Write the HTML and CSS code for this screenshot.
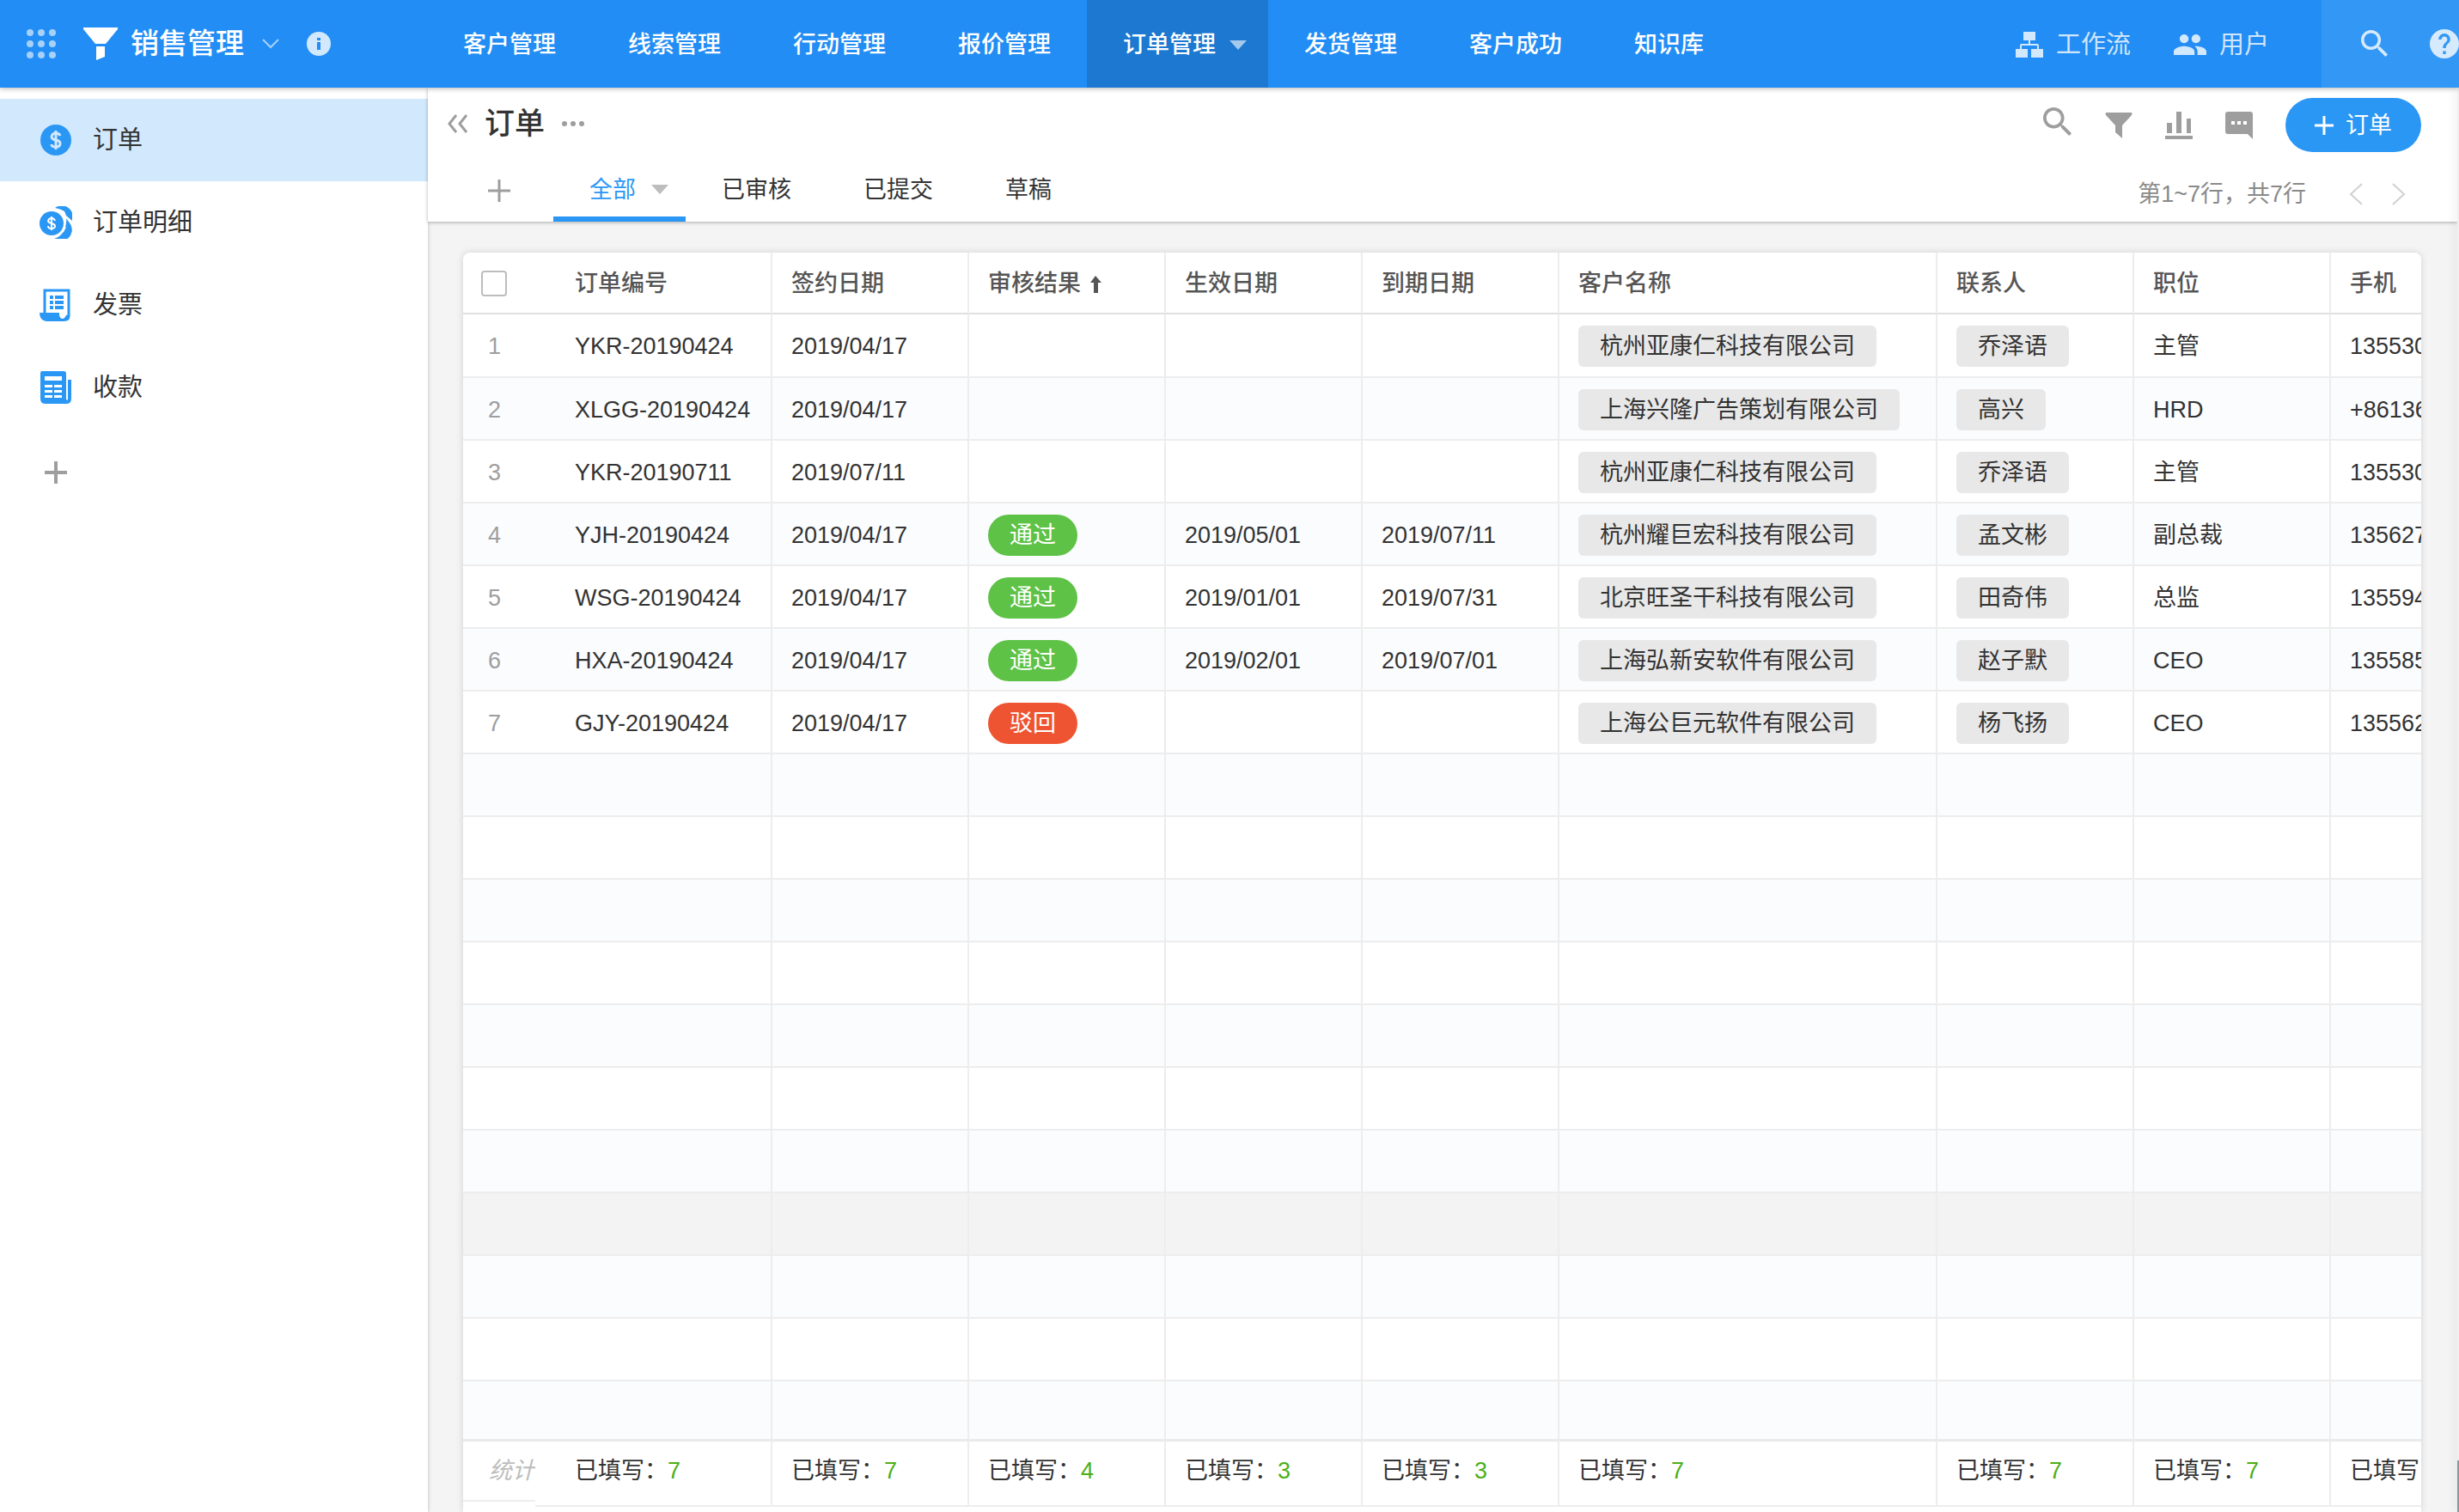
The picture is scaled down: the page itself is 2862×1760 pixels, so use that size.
FILE: index.html
```html
<!DOCTYPE html>
<html lang="zh-CN">

<head>
    <meta charset="UTF-8">
    <meta name="viewport" content="width=device-width, initial-scale=1.0">
    <title>销售管理 - 订单</title>
    <link rel="stylesheet" href="styles.css">
</head>

<body>
    <header class="topbar">
        <div class="brand">
            <button class="icon-btn apps" aria-label="应用列表">
                <svg width="34" height="34" viewBox="0 0 34 34" fill="currentColor">
                    <circle cx="4" cy="4" r="4"/><circle cx="17" cy="4" r="4"/><circle cx="30" cy="4" r="4"/>
                    <circle cx="4" cy="17" r="4"/><circle cx="17" cy="17" r="4"/><circle cx="30" cy="17" r="4"/>
                    <circle cx="4" cy="30" r="4"/><circle cx="17" cy="30" r="4"/><circle cx="30" cy="30" r="4"/>
                </svg>
            </button>
            <svg class="brand-logo" width="40" height="38" viewBox="0 0 40 38" fill="#fff">
                <path d="M0 0h40v2L26 19H14L0 2z"/>
                <path d="M15 22h10v12l-10 4z"/>
            </svg>
            <span class="brand-name">销售管理</span>
            <button class="icon-btn brand-more" aria-label="切换应用">
                <svg width="20" height="12" viewBox="0 0 20 12" fill="none" stroke="currentColor" stroke-width="2"><path d="M1 1l9 9 9-9"/></svg>
            </button>
            <button class="icon-btn" aria-label="应用说明">
                <svg width="28" height="28" viewBox="0 0 28 28">
                    <circle cx="14" cy="14" r="14" fill="currentColor"/>
                    <path d="M12 7h4v3h-4zM12 12h4v9h-4z" fill="#228df4"/>
                </svg>
            </button>
        </div>

        <nav class="main-nav">
            <a href="#">客户管理</a>
            <a href="#">线索管理</a>
            <a href="#">行动管理</a>
            <a href="#">报价管理</a>
            <a href="#" class="active">订单管理<i class="caret"></i></a>
            <a href="#">发货管理</a>
            <a href="#">客户成功</a>
            <a href="#">知识库</a>
        </nav>

        <div class="top-links">
            <a href="#">
                <svg width="32" height="30" viewBox="0 0 32 30" fill="currentColor">
                    <path d="M9 0h14v10H9zM0 20h14v10H0zM18 20h14v10H18z"/>
                    <path d="M15 10h2v4h8q2 0 2 2v4h-2v-4H7v4H5v-4q0-2 2-2h8z"/>
                </svg>
                工作流
            </a>
            <a href="#">
                <svg width="38" height="26" viewBox="1 5 22 14" fill="currentColor">
                    <path d="M16 11c1.66 0 2.99-1.34 2.99-3S17.66 5 16 5s-3 1.34-3 3 1.34 3 3 3zm-8 0c1.66 0 2.99-1.34 2.99-3S9.66 5 8 5 5 6.340 5 8s1.34 3 3 3zm0 2c-2.330 0-7 1.170-7 3.500V19h14v-2.500c0-2.330-4.670-3.500-7-3.500zm8 0c-.29 0-.62.020-.97.050 1.160.840 1.970 1.970 1.970 3.450V19h6v-2.500c0-2.330-4.670-3.500-7-3.500z"/>
                </svg>
                用户
            </a>
        </div>
        <div class="top-tools">
            <button class="icon-btn" aria-label="搜索">
                <svg width="32" height="32" viewBox="3 3 18 18" fill="currentColor"><path d="M15.500 14h-.79l-.28-.27C15.410 12.590 16 11.110 16 9.500 16 5.910 13.090 3 9.500 3S3 5.910 3 9.500 5.910 16 9.500 16c1.610 0 3.090-.59 4.230-1.570l.27.28v.79l5 4.990L20.490 19l-4.990-5zm-6 0C7.010 14 5 11.990 5 9.500S7.010 5 9.500 5 14 7.010 14 9.500 11.990 14 9.500 14z"/></svg>
            </button>
            <button class="icon-btn" aria-label="帮助">
                <svg width="34" height="34" viewBox="2 2 20 20" fill="currentColor"><path d="M12 2C6.480 2 2 6.480 2 12s4.480 10 10 10 10-4.480 10-10S17.520 2 12 2zm1 17h-2v-2h2v2zm2.070-7.750l-.9.920C13.450 12.900 13 13.500 13 15h-2v-.5c0-1.100.45-2.100 1.170-2.830l1.240-1.260c.37-.36.59-.86.59-1.410 0-1.100-.9-2-2-2s-2 .9-2 2H8c0-2.210 1.790-4 4-4s4 1.790 4 4c0 .88-.36 1.680-.93 2.250z"/></svg>
            </button>
        </div>
    </header>

    <div class="layout">
        <aside class="sidebar">
            <a href="#" class="side-item active">
                <svg width="38" height="38" viewBox="0 0 38 38">
                    <circle cx="19" cy="19" r="18" fill="#2b97f5"/>
                    <path d="M24 14q-1-3-5-3t-5 4q0 3 5 4t5 4q0 4-5 4t-5-3M19 8v22" fill="none" stroke="#d1e8fd" stroke-width="3"/>
                </svg>
                订单
            </a>
            <a href="#" class="side-item">
                <svg width="38" height="38" viewBox="0 0 38 38">
                    <path d="M18 2a13 13 0 0 1 20 15l-7-6-2-5q-5-3-11-4z" fill="#2b97f5"/>
                    <path d="M31 14l5 7a13 13 0 0 1-19 17q9-3 12-11 3-7 2-13z" fill="#2b97f5"/>
                    <path d="M25 5l4 3M30 24l-3 6" fill="none" stroke="#fff" stroke-width="2"/>
                    <circle cx="14" cy="20" r="14" fill="#2b97f5"/>
                    <path d="M18 17q-1-3-4-3t-4 3q0 2 4 3t4 3q0 3-4 3t-4-3M14 12v16" fill="none" stroke="#fff" stroke-width="2"/>
                </svg>
                订单明细
            </a>
            <a href="#" class="side-item">
                <svg width="38" height="38" viewBox="0 0 38 38" fill="none">
                    <path d="M6 28V2h28v30q0 4-4 4" stroke="#2b97f5" stroke-width="3"/>
                    <path d="M0 28h23v3q1 4 4 4 3-1 4-4l4-1q0 8-7 8H8q-8-1-8-10z" fill="#2b97f5"/>
                    <path d="M12 10h4M12 16h4M12 22h4M18 10h10M18 16h10M18 22h10" stroke="#2b97f5" stroke-width="4"/>
                </svg>
                发票
            </a>
            <a href="#" class="side-item">
                <svg width="38" height="38" viewBox="0 0 38 38">
                    <path d="M3 0h25q3 0 3 3v30q2 2 2-1V10h4v22q0 6-6 6H7q-6 0-6-6V3q0-3 2-3z" fill="#2b97f5"/>
                    <path d="M6 6h20v5H6zM6 16h9v3H6zM17 16h9v3h-9zM6 22h9v3H6zM17 22h9v3h-9zM6 28h9v3H6zM17 28h9v3h-9z" fill="#fff"/>
                </svg>
                收款
            </a>
            <button class="icon-btn side-add" aria-label="新建工作表">
                <svg width="26" height="26" viewBox="0 0 26 26" stroke="currentColor" stroke-width="4"><path d="M0 13h26M13 0v26"/></svg>
            </button>
        </aside>

        <main class="main">
            <div class="sheet-head">
                <div class="sheet-left">
                    <div class="sheet-title">
                        <button class="icon-btn" aria-label="收起侧栏">
                            <svg width="25" height="22" viewBox="0 0 25 22" fill="none" stroke="currentColor" stroke-width="3"><path d="M11 1L3 11l8 10M23 1l-8 10 8 10"/></svg>
                        </button>
                        <h1>订单</h1>
                        <button class="icon-btn" aria-label="更多">
                            <svg width="28" height="8" viewBox="0 0 28 8" fill="currentColor"><circle cx="4" cy="4" r="3"/><circle cx="14" cy="4" r="3"/><circle cx="24" cy="4" r="3"/></svg>
                        </button>
                    </div>
                    <div class="tabs">
                        <button class="icon-btn tab-add" aria-label="新建视图">
                            <svg width="26" height="26" viewBox="0 0 26 26" stroke="currentColor" stroke-width="3"><path d="M0 13h26M13 0v26"/></svg>
                        </button>
                        <a href="#" class="tab active">全部<i class="caret"></i></a>
                        <a href="#" class="tab">已审核</a>
                        <a href="#" class="tab">已提交</a>
                        <a href="#" class="tab">草稿</a>
                    </div>
                </div>

                <div class="sheet-right">
                    <div class="sheet-tools">
                        <button class="icon-btn tool-search" aria-label="搜索记录">
                            <svg width="34" height="34" viewBox="3 3 18 18" fill="currentColor"><path d="M15.500 14h-.79l-.28-.27C15.410 12.590 16 11.110 16 9.500 16 5.910 13.090 3 9.500 3S3 5.910 3 9.500 5.910 16 9.500 16c1.610 0 3.090-.59 4.230-1.570l.27.28v.79l5 4.990L20.490 19l-4.990-5zm-6 0C7.010 14 5 11.990 5 9.500S7.010 5 9.500 5 14 7.010 14 9.500 11.990 14 9.500 14z"/></svg>
                        </button>
                        <button class="icon-btn" aria-label="筛选">
                            <svg width="32" height="32" viewBox="0 0 32 32" fill="currentColor"><path d="M1 1h30q1 1 0 3L20 16v15l-8-7v-8L1 4q-1-2 0-3z"/></svg>
                        </button>
                        <button class="icon-btn" aria-label="图表">
                            <svg width="32" height="32" viewBox="0 0 32 32" fill="currentColor"><path d="M0 28h32v4H0zM2 13h6v12H2zM13 0h6v25h-6zM25 8h5v17h-5z"/></svg>
                        </button>
                        <button class="icon-btn" aria-label="讨论">
                            <svg width="32" height="32" viewBox="0 0 32 32"><path d="M3 0h26q3 0 3 3v29l-6-6H3q-3 0-3-3V3q0-3 3-3z" fill="currentColor"/><path d="M7 11h4v4H7zM14 11h4v4h-4zM21 11h4v4h-4z" fill="#fff"/></svg>
                        </button>
                        <button class="add-btn">
                            <svg width="22" height="22" viewBox="0 0 22 22" stroke="currentColor" stroke-width="3"><path d="M0 11h22M11 0v22"/></svg>
                            订单
                        </button>
                    </div>
                    <div class="pager">
                        <span>第1~7行，共7行</span>
                        <button class="icon-btn" aria-label="上一页">
                            <svg width="16" height="26" viewBox="0 0 16 26" fill="none" stroke="currentColor" stroke-width="2"><path d="M15 1L2 13l13 12"/></svg>
                        </button>
                        <button class="icon-btn" aria-label="下一页">
                            <svg width="16" height="26" viewBox="0 0 16 26" fill="none" stroke="currentColor" stroke-width="2"><path d="M1 1l13 12L1 25"/></svg>
                        </button>
                    </div>
                </div>
            </div>

            <div class="card">
                <div class="table-scroll">
                    <table class="grid">
                        <colgroup>
                            <col class="c-index"><col class="c-no"><col><col><col><col><col class="c-customer"><col><col><col>
                        </colgroup>
                        <thead>
                            <tr>
                                <th class="index"><input type="checkbox" aria-label="全选"></th>
                                <th>订单编号</th>
                                <th>签约日期</th>
                                <th>审核结果<svg class="sort" width="13" height="20" viewBox="0 0 13 20" fill="currentColor"><path d="M6 0l7 8H9v12H4V8H0z"/></svg></th>
                                <th>生效日期</th>
                                <th>到期日期</th>
                                <th>客户名称</th>
                                <th>联系人</th>
                                <th>职位</th>
                                <th>手机</th>
                            </tr>
                        </thead>
                        <tbody id="rows">
                            <tr><td class="index">1</td><td>YKR-20190424</td><td>2019/04/17</td><td></td><td></td><td></td><td><span class="chip">杭州亚康仁科技有限公司</span></td><td><span class="chip">乔泽语</span></td><td>主管</td><td>135530</td></tr>
                            <tr><td class="index">2</td><td>XLGG-20190424</td><td>2019/04/17</td><td></td><td></td><td></td><td><span class="chip">上海兴隆广告策划有限公司</span></td><td><span class="chip">高兴</span></td><td>HRD</td><td>+86136</td></tr>
                            <tr><td class="index">3</td><td>YKR-20190711</td><td>2019/07/11</td><td></td><td></td><td></td><td><span class="chip">杭州亚康仁科技有限公司</span></td><td><span class="chip">乔泽语</span></td><td>主管</td><td>135530</td></tr>
                            <tr><td class="index">4</td><td>YJH-20190424</td><td>2019/04/17</td><td><span class="status pass">通过</span></td><td>2019/05/01</td><td>2019/07/11</td><td><span class="chip">杭州耀巨宏科技有限公司</span></td><td><span class="chip">孟文彬</span></td><td>副总裁</td><td>135627</td></tr>
                            <tr><td class="index">5</td><td>WSG-20190424</td><td>2019/04/17</td><td><span class="status pass">通过</span></td><td>2019/01/01</td><td>2019/07/31</td><td><span class="chip">北京旺圣干科技有限公司</span></td><td><span class="chip">田奇伟</span></td><td>总监</td><td>135594</td></tr>
                            <tr><td class="index">6</td><td>HXA-20190424</td><td>2019/04/17</td><td><span class="status pass">通过</span></td><td>2019/02/01</td><td>2019/07/01</td><td><span class="chip">上海弘新安软件有限公司</span></td><td><span class="chip">赵子默</span></td><td>CEO</td><td>135585</td></tr>
                            <tr><td class="index">7</td><td>GJY-20190424</td><td>2019/04/17</td><td><span class="status reject">驳回</span></td><td></td><td></td><td><span class="chip">上海公巨元软件有限公司</span></td><td><span class="chip">杨飞扬</span></td><td>CEO</td><td>135562</td></tr>
                        </tbody>
                        <tfoot>
                            <tr>
                                <td class="index"><div class="stat-label">统计</div></td>
                                <td><div class="stat">已填写：<b>7</b></div></td>
                                <td><div class="stat">已填写：<b>7</b></div></td>
                                <td><div class="stat">已填写：<b>4</b></div></td>
                                <td><div class="stat">已填写：<b>3</b></div></td>
                                <td><div class="stat">已填写：<b>3</b></div></td>
                                <td><div class="stat">已填写：<b>7</b></div></td>
                                <td><div class="stat">已填写：<b>7</b></div></td>
                                <td><div class="stat">已填写：<b>7</b></div></td>
                                <td><div class="stat">已填写</div></td>
                            </tr>
                        </tfoot>
                    </table>
                </div>
            </div>
        </main>
        <div class="drawer-edge"></div>
    </div>

    <script>
        // pad the grid with blank rows below the records
        const rows = document.getElementById('rows');
        const total = 20;
        const highlighted = 15;

        for (let i = rows.children.length + 1; i <= total; i++) {
            const tr = document.createElement('tr');
            if (i === highlighted) tr.className = 'hover';
            tr.innerHTML = '<td class="index"></td>' + '<td></td>'.repeat(9);
            rows.appendChild(tr);
        }
    </script>
</body>

</html>
```

FILE: styles.css
```css
* {
    box-sizing: border-box;
}

body {
    margin: 0;
    height: 100vh;
    display: flex;
    flex-direction: column;
    overflow: hidden;
    background-color: #f4f4f4;
    color: #333;
    font-family: 'Liberation Sans', 'Noto Sans CJK SC', sans-serif;
    font-size: 27px;
    line-height: 40px;
}

a {
    color: inherit;
    text-decoration: none;
}

svg {
    display: block;
    flex: none;
}

button {
    font: inherit;
    border: none;
    cursor: pointer;
}

.icon-btn {
    padding: 0;
    background: none;
    color: #9e9e9e;
}

.caret {
    border: 10px solid transparent;
    border-top: 11px solid #bdbdbd;
    border-bottom: none;
}

/* top bar */
.topbar {
    position: relative;
    z-index: 2;
    display: flex;
    flex: none;
    height: 102px;
    background-color: #228df4;
    color: #fff;
    box-shadow: 0 1px 6px rgba(0, 0, 0, 0.3);
}

.brand {
    display: flex;
    align-items: center;
    width: 497px;
    padding-left: 31px;
}

.brand .icon-btn {
    color: rgba(255, 255, 255, 0.8);
}

.brand .apps {
    color: rgba(255, 255, 255, 0.6);
}

.brand-logo {
    margin: 0 15px 0 32px;
}

.brand-name {
    font-size: 33px;
    font-weight: 500;
}

.brand .brand-more {
    margin: 0 32px 0 21px;
    color: rgba(255, 255, 255, 0.6);
}

.main-nav {
    display: flex;
}

.main-nav a {
    display: flex;
    align-items: center;
    padding: 2px 42px 0;
    font-weight: 500;
}

.main-nav .active {
    padding-right: 25px;
    background-color: #1c78d0;
}

.main-nav .caret {
    margin-left: 16px;
    border-top-color: rgba(255, 255, 255, 0.6);
}

.top-links {
    display: flex;
    gap: 50px;
    margin-left: auto;
    padding-right: 61px;
}

.top-links a {
    display: flex;
    align-items: center;
    gap: 15px;
    padding-top: 2px;
    font-size: 29px;
    color: rgba(255, 255, 255, 0.8);
}

.top-tools {
    display: flex;
    align-items: center;
    justify-content: space-between;
    width: 160px;
    padding-left: 46px;
    background-color: #3398f5;
}

.top-tools .icon-btn {
    color: rgba(255, 255, 255, 0.8);
}

/* sidebar */
.layout {
    display: flex;
    flex: 1;
    min-height: 0;
}

.sidebar {
    flex: none;
    width: 498px;
    padding-top: 13px;
    background-color: #fff;
    box-shadow: 0 0 4px rgba(0, 0, 0, 0.25);
}

.side-item {
    display: flex;
    align-items: center;
    gap: 24px;
    height: 96px;
    padding-left: 46px;
    font-size: 29px;
}

.side-item.active {
    background-color: #d1e8fd;
}

.side-add {
    margin: 38px 52px;
}

/* sheet header */
.main {
    display: flex;
    flex: 1;
    flex-direction: column;
    min-width: 0;
}

.sheet-head {
    display: flex;
    justify-content: space-between;
    flex: none;
    height: 156px;
    padding: 0 42px 0 22px;
    background-color: #fff;
    box-shadow: 0 1px 4px rgba(0, 0, 0, 0.3);
}

.sheet-left,
.sheet-right {
    display: flex;
    flex-direction: column;
    justify-content: space-between;
}

.sheet-title {
    display: flex;
    align-items: center;
    gap: 19px;
    height: 84px;
}

.sheet-title h1 {
    margin: 0;
    font-size: 35px;
    font-weight: 500;
}

.tabs {
    display: flex;
    padding-left: 48px;
}

.tab-add {
    margin-right: 50px;
}

.tab {
    display: flex;
    align-items: center;
    height: 72px;
    padding: 3px 42px 0;
    border-bottom: 6px solid transparent;
}

.tab.active {
    padding-right: 20px;
    border-bottom-color: #2b97f5;
    color: #2b97f5;
}

.tab .caret {
    margin-left: 18px;
}

.sheet-right {
    align-items: flex-end;
    padding: 12px 0;
}

.sheet-tools {
    display: flex;
    align-items: center;
    gap: 38px;
}

.tool-search {
    padding-bottom: 8px;
}

.add-btn {
    display: flex;
    align-items: center;
    justify-content: center;
    gap: 14px;
    width: 158px;
    height: 63px;
    border-radius: 32px;
    background-color: #2b97f5;
    color: #fff;
}

.pager {
    display: flex;
    align-items: center;
    padding-right: 18px;
    color: #8a8a8a;
}

.pager .icon-btn {
    margin-left: 34px;
    color: #d0d0d0;
}

.pager span + .icon-btn {
    margin-left: 50px;
}

/* record grid */
.card {
    display: flex;
    flex: 1;
    flex-direction: column;
    min-height: 0;
    margin: 36px 42px 0 41px;
    padding-bottom: 6px;
    border-radius: 8px 8px 0 0;
    background-color: #fff;
    box-shadow: 0 0 8px rgba(0, 0, 0, 0.14);
    overflow: hidden;
}

.table-scroll {
    flex: 1;
    min-height: 0;
    overflow: auto;
    scrollbar-width: none;
}

.grid {
    width: 2403px;
    table-layout: fixed;
    border-collapse: separate;
    border-spacing: 0;
}

.grid col {
    width: 229px;
}

.grid .c-index {
    width: 84px;
}

.grid .c-no {
    width: 276px;
}

.grid .c-customer {
    width: 440px;
}

.grid th,
.grid td {
    padding: 2px 0 0 22px;
    border-right: 2px solid #ededed;
    border-bottom: 2px solid #ededed;
    text-align: left;
    white-space: nowrap;
}

.grid th {
    height: 72px;
    border-bottom-color: #e0e0e0;
    color: #555;
    font-weight: 500;
}

.grid td {
    height: 73px;
}

.grid tbody tr:first-child td {
    height: 74px;
}

.grid th:nth-child(2),
.grid tbody td:nth-child(2) {
    padding-left: 46px;
}

.grid tr > .index {
    padding: 2px 11px 0 0;
    border-right: none;
    color: #9e9e9e;
    text-align: center;
}

.grid tbody tr:nth-child(even) {
    background-color: #fafcfe;
}

.grid tbody tr.hover {
    background-color: #f3f3f3;
}

.grid input {
    display: block;
    width: 30px;
    height: 30px;
    margin: 0 0 0 21px;
    border: 2px solid #bdbdbd;
    border-radius: 4px;
    background-color: #fff;
    appearance: none;
}

.sort {
    display: inline-block;
    margin-left: 11px;
    vertical-align: -2px;
}

.chip,
.status {
    display: inline-block;
    padding: 0 25px;
    border-radius: 6px;
    background-color: #e8e8e8;
    line-height: 48px;
    vertical-align: middle;
}

.status {
    border-radius: 24px;
    color: #fff;
}

.pass {
    background-color: #5ec247;
}

.reject {
    background-color: #ee5431;
}

.grid tfoot td {
    position: sticky;
    bottom: 0;
    height: 79px;
    padding: 0;
    border-top: 3px solid #e8eaec;
    border-bottom: none;
    background-color: #fff;
    vertical-align: top;
}

.grid tfoot .index {
    padding: 0;
}

.stat,
.stat-label {
    height: 76px;
    padding-left: 22px;
    border-bottom: 2px solid #ededed;
    line-height: 68px;
}

td:nth-child(2) .stat {
    padding-left: 46px;
}

.stat b {
    color: #4caf17;
    font-weight: 400;
}

.stat-label {
    height: 70px;
    padding-left: 30px;
    color: #bdbdbd;
    font-style: italic;
    text-align: left;
    overflow: hidden;
}

/* closed drawer on the right side of the window */
.drawer-edge {
    display: flex;
    flex: none;
    align-items: flex-end;
    width: 2px;
    background-color: #f0f0f0;
    box-shadow: 0 0 12px rgba(0, 0, 0, 0.25);
}

.drawer-edge::after {
    content: '';
    width: 2px;
    height: 60px;
    background-color: #8b979f;
}
```
